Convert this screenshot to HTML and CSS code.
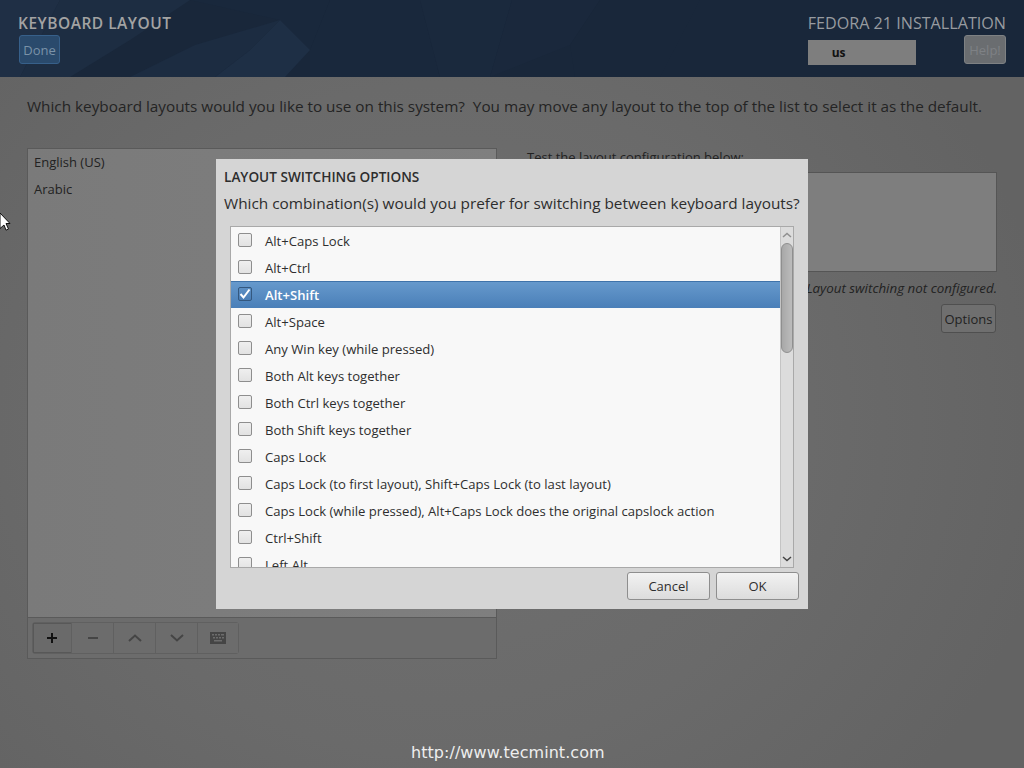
FILE: index.html
```html
<!DOCTYPE html>
<html lang="en">
<head>
<meta charset="utf-8">
<title>Keyboard Layout</title>
<link rel="stylesheet" href="styles.css">
</head>
<body>
<header class="topbar">
  <svg class="facets" viewBox="0 0 1024 77" preserveAspectRatio="none" aria-hidden="true">
    <polygon points="0,0 60,0 20,77 0,77" fill="#1f2f45"/>
    <polygon points="60,0 190,0 130,40 70,77 20,77" fill="#1d2d42"/>
    <polygon points="190,0 330,0 310,50 280,20" fill="#19283c"/>
    <polygon points="280,20 310,50 285,77 215,77 250,50" fill="#1e2f45"/>
    <polygon points="280,20 250,50 215,77 130,77 195,45" fill="#1c2c41"/>
    <polygon points="330,0 420,0 440,77 310,77 310,50" fill="#19283c"/>
    <polygon points="420,0 512,0 490,77 440,77" fill="#1a293d"/>
    <polygon points="512,0 600,0 570,45 490,77" fill="#1a283c"/>
    <polygon points="570,45 600,0 700,0 660,77 575,77" fill="#19273a"/>
  </svg>
  <div class="spoke">
    <h1 class="spoke-title">KEYBOARD LAYOUT</h1>
    <button class="btn-done">Done</button>
  </div>
  <div class="product">
    <div class="product-title">FEDORA 21 INSTALLATION</div>
    <div class="product-row">
      <div class="kbd-indicator">us</div>
      <button class="btn-help">Help!</button>
    </div>
  </div>
</header>

<main class="content">
  <p class="intro">Which keyboard layouts would you like to use on this system?&nbsp; You may move any layout to the top of the list to select it as the default.</p>
  <div class="columns">
    <section class="layouts">
      <ul class="layout-list">
        <li>English (US)</li>
        <li>Arabic</li>
      </ul>
      <div class="toolbar-wrap">
        <div class="toolbar">
          <button class="tool tool-active"><svg width="14" height="14" viewBox="0 0 14 14"><path d="M7 2v10M2 7h10" stroke="#111" stroke-width="2" fill="none"/></svg></button>
          <button class="tool"><svg width="14" height="14" viewBox="0 0 14 14"><path d="M2 7h10" stroke="#454545" stroke-width="2" fill="none"/></svg></button>
          <button class="tool"><svg width="14" height="14" viewBox="0 0 14 14"><path d="M1 10l6-5.500 6 5.500" stroke="#454545" stroke-width="2" fill="none"/></svg></button>
          <button class="tool"><svg width="14" height="14" viewBox="0 0 14 14"><path d="M1 4l6 5.500 6-5.500" stroke="#454545" stroke-width="2" fill="none"/></svg></button>
          <button class="tool"><svg width="16" height="12" viewBox="0 0 16 12"><path fill-rule="evenodd" fill="#454545" d="M0 0h16v12H0zM2 2v1.500h2V2zM5 2v1.500h2V2zM8 2v1.500h2V2zM11 2v1.500h3V2zM3 5v1.500h2V5zM6 5v1.500h2V5zM9 5v1.500h2V5zM12 5v1.500h2V5zM4 8v1.500h8V8z"/></svg></button>
        </div>
      </div>
    </section>
    <section class="tester">
      <label class="test-label">Test the layout configuration below:</label>
      <div class="test-box"></div>
      <p class="switch-note">Layout switching not configured.</p>
      <div class="options-row"><button class="btn-options">Options</button></div>
    </section>
  </div>
</main>

<div class="watermark">http://www.tecmint.com</div>

<svg class="pointer" width="12" height="20" viewBox="0 0 12 20" aria-hidden="true"><path d="M0 0l10 10.500H6l2.500 5.500-2.500 1.200L4 12l-4 3.500z" fill="#fff" stroke="#111" stroke-width="1"/></svg>

<div class="dialog" role="dialog">
  <h2 class="dialog-title">LAYOUT SWITCHING OPTIONS</h2>
  <p class="dialog-question">Which combination(s) would you prefer for switching between keyboard layouts?</p>
  <div class="list-frame">
    <ul class="option-list">
      <li class="option"><span class="check"></span>Alt+Caps Lock</li>
      <li class="option"><span class="check"></span>Alt+Ctrl</li>
      <li class="option option-selected"><span class="check"><svg width="12" height="12" viewBox="0 0 12 12"><path d="M1.500 6l3 3.500L10.500 1.500" stroke="#fff" stroke-width="2" fill="none"/></svg></span>Alt+Shift</li>
      <li class="option"><span class="check"></span>Alt+Space</li>
      <li class="option"><span class="check"></span>Any Win key (while pressed)</li>
      <li class="option"><span class="check"></span>Both Alt keys together</li>
      <li class="option"><span class="check"></span>Both Ctrl keys together</li>
      <li class="option"><span class="check"></span>Both Shift keys together</li>
      <li class="option"><span class="check"></span>Caps Lock</li>
      <li class="option"><span class="check"></span>Caps Lock (to first layout), Shift+Caps Lock (to last layout)</li>
      <li class="option"><span class="check"></span>Caps Lock (while pressed), Alt+Caps Lock does the original capslock action</li>
      <li class="option"><span class="check"></span>Ctrl+Shift</li>
      <li class="option"><span class="check"></span>Left Alt</li>
    </ul>
    <div class="scrollbar">
      <svg class="arrow" width="10" height="6" viewBox="0 0 10 6"><path d="M1 5l4-3.500L9 5" stroke="#8f8f8f" stroke-width="1.500" fill="none"/></svg>
      <div class="track"><div class="thumb"></div></div>
      <svg class="arrow" width="10" height="6" viewBox="0 0 10 6"><path d="M1 1l4 3.500L9 1" stroke="#444" stroke-width="1.500" fill="none"/></svg>
    </div>
  </div>
  <div class="dialog-actions">
    <button class="btn">Cancel</button>
    <button class="btn">OK</button>
  </div>
</div>
</body>
</html>
```

FILE: styles.css
```css
* { box-sizing: border-box; }
html, body { margin: 0; padding: 0; }
body {
  width: 1024px;
  height: 768px;
  overflow: hidden;
  position: relative;
  font-family: "Open Sans", "Noto Sans", sans-serif;
  font-size: 14px;
  color: #262626;
  background: radial-gradient(ellipse 620px 560px at 440px 420px, #707070 0%, #6a6a6a 60%, #636363 100%);
}
ul { list-style: none; margin: 0; padding: 0; }
p, h1, h2 { margin: 0; }
button { font-family: inherit; padding: 0; }

.topbar {
  position: relative;
  height: 77px;
  background: #19273a;
  display: flex;
  justify-content: space-between;
  padding: 14px 18px 0;
  overflow: hidden;
}
.facets { position: absolute; inset: 0; width: 100%; height: 100%; }
.spoke, .product { position: relative; }
.spoke-title {
  font-size: 15.500px;
  font-weight: 600;
  letter-spacing: 0.5px;
  line-height: 18px;
  color: #a3a3a3;
}
.btn-done {
  display: block;
  width: 41px;
  height: 29px;
  margin: 3px 0 0 1px;
  background: #2a4a6c;
  border: 1px solid #37608a;
  border-radius: 3px;
  color: #7a92a8;
  font-size: 13px;
}
.product-title {
  font-size: 16.150px;
  line-height: 18px;
  color: #979ba0;
}
.product-row {
  display: flex;
  justify-content: space-between;
  margin-top: 3px;
}
.kbd-indicator {
  width: 108px;
  height: 25px;
  margin-top: 5px;
  padding-left: 24px;
  background: #7e7e7e;
  color: #111;
  font-size: 12px;
  font-weight: 700;
  line-height: 26px;
}
.btn-help {
  width: 42px;
  height: 29px;
  background: #6a6d70;
  border: 1px solid #7e8183;
  border-radius: 3px;
  color: #7e8185;
  font-size: 13px;
}

.content { padding: 0 27px; }
.intro {
  margin-top: 19px;
  font-size: 15.300px;
  line-height: 20px;
  color: #242424;
  white-space: nowrap;
}
.columns {
  display: flex;
  gap: 30px;
  margin-top: 32px;
}
.layouts {
  width: 470px;
  height: 511px;
  display: flex;
  flex-direction: column;
  background: linear-gradient(90deg, #7a7a7a, #7f7f7f);
  border: 1px solid #5a5a5a;
}
.layout-list { flex: 1; }
.layout-list li {
  height: 27px;
  line-height: 27px;
  padding-left: 6px;
  font-size: 13px;
  color: #222;
}
.toolbar-wrap {
  height: 41px;
  padding: 4px;
  background: #6c6c6c;
  border-top: 1px solid #5a5a5a;
}
.toolbar {
  display: flex;
  width: 207px;
  height: 32px;
  border: 1px solid #606060;
  border-radius: 3px;
}
.tool {
  flex: none;
  width: 42px;
  display: flex;
  align-items: center;
  justify-content: center;
  background: #6c6c6c;
  border: 0;
  border-right: 1px solid #606060;
}
.tool:last-child { border-right: 0; width: 40px; }
.tool-active {
  width: 39px;
  background: #6a6a6a;
  box-shadow: inset 1px 1px 0 #585858, inset 0 -1px 0 #585858;
}

.tester { width: 470px; }
.test-label {
  display: block;
  height: 24px;
  font-size: 13px;
  line-height: 18px;
  color: #222;
}
.test-box {
  height: 100px;
  background: #7e7e7e;
  border: 1px solid #555;
}
.switch-note {
  margin-top: 7px;
  font-size: 13.350px;
  font-style: italic;
  line-height: 18px;
  text-align: right;
  color: #222;
}
.options-row {
  display: flex;
  justify-content: flex-end;
  margin-top: 7px;
  padding-right: 1px;
}
.btn-options {
  width: 55px;
  height: 29px;
  background: #6f6f6f;
  border: 1px solid #4f4f4f;
  border-radius: 3px;
  color: #222;
  font-size: 13px;
}

.watermark {
  position: absolute;
  left: 411px;
  top: 743px;
  font-family: "DejaVu Sans", sans-serif;
  font-size: 16px;
  line-height: 20px;
  letter-spacing: 0.05px;
  color: #eee;
}
.pointer { position: absolute; left: 0; top: 213px; }

.dialog {
  position: absolute;
  left: 216px;
  top: 159px;
  width: 592px;
  height: 450px;
  padding: 9px 8px 0;
  background: #d5d5d5;
}
.dialog-title {
  font-size: 13.600px;
  font-weight: 600;
  line-height: 18px;
  color: #2d2d2d;
}
.dialog-question {
  margin-top: 7px;
  font-size: 15.350px;
  line-height: 20px;
  color: #2d2d2d;
  white-space: nowrap;
}
.list-frame {
  display: flex;
  width: 564px;
  height: 342px;
  margin: 13px 0 0 6px;
  background: #f8f8f8;
  border: 1px solid #a9a9a9;
  overflow: hidden;
}
.option-list { flex: 1; min-width: 0; height: 340px; overflow: hidden; }
.option {
  display: flex;
  align-items: center;
  height: 27px;
  padding-left: 7px;
  font-size: 13.100px;
  color: #2e2e2e;
}
.check {
  flex: none;
  display: flex;
  align-items: center;
  justify-content: center;
  width: 14px;
  height: 14px;
  margin: -2px 13px 0 0;
  background: linear-gradient(#efefef, #e2e2e2);
  border: 1px solid #8e8e8e;
  border-radius: 2px;
}
.option-selected {
  background: linear-gradient(#6699cc, #4a7fb8);
  border-top: 1px solid #3f73aa;
  color: #fff;
  font-weight: 600;
}
.option-selected .check { background: linear-gradient(#5c8fc4, #4a7db5); border-color: #34587f; }
.scrollbar {
  flex: none;
  width: 13px;
  height: 340px;
  display: flex;
  flex-direction: column;
  align-items: center;
  background: #dcdcdc;
  border-left: 1px solid #c4c4c4;
}
.arrow { flex: none; margin: 5px 0; }
.track { flex: 1; width: 100%; }
.thumb {
  width: 12px;
  height: 110px;
  background: linear-gradient(90deg, #a8a8a8, #bcbcbc);
  border: 1px solid #8f8f8f;
  border-radius: 6px;
}
.dialog-actions {
  display: flex;
  justify-content: flex-end;
  gap: 6px;
  margin-top: 4px;
  padding-right: 1px;
}
.btn {
  width: 83px;
  height: 28px;
  background: linear-gradient(#f2f2f2, #dcdcdc);
  border: 1px solid #8e8e8e;
  border-radius: 3px;
  color: #2e2e2e;
  font-size: 13px;
}
```
